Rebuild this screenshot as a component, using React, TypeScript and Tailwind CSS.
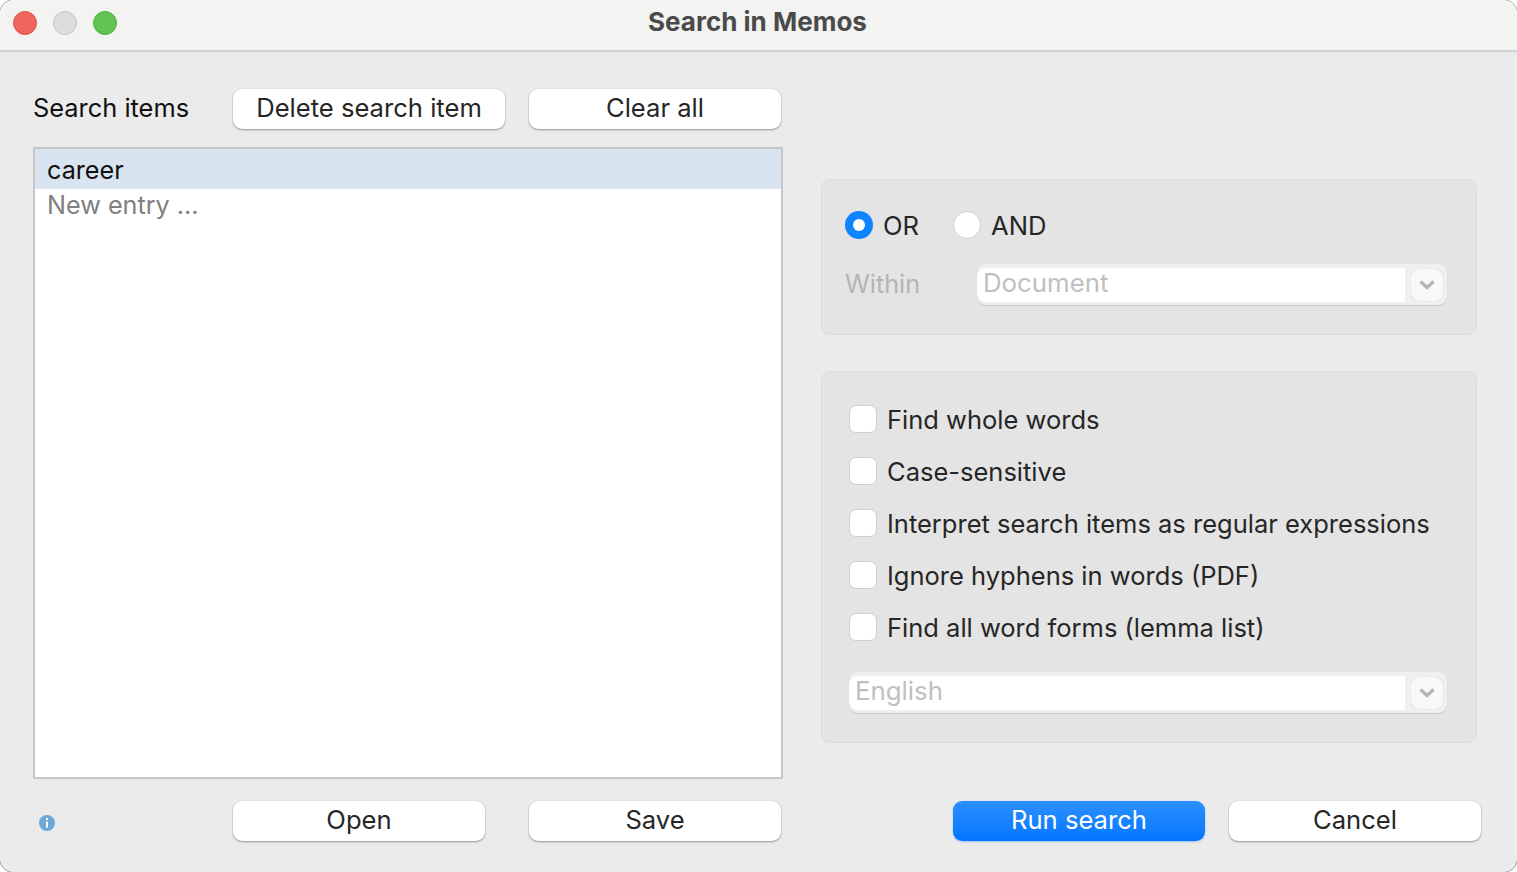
import React from 'react';

const font = { fontFamily: 'Inter, "Liberation Sans", sans-serif' };

const Button = ({ label, width }: { label: string; width: string }) => (
  <button
    className={`${width} h-10 rounded-[9px] bg-white pb-[2px] text-[25.6px] leading-[38px] text-[#262626] shadow-[0_1px_2px_rgba(0,0,0,0.35),0_0_1px_rgba(0,0,0,0.2)]`}
  >
    {label}
  </button>
);

const Check = ({ label }: { label: string }) => (
  <div className="flex h-[52px] items-center gap-[10px]">
    <div className="h-7 w-7 rounded-[7px] border border-[#cfcfcf] bg-white" />
    <span className="pt-[2px] text-[25.5px] leading-8 text-[#262626]">{label}</span>
  </div>
);

const Combo = ({ label, width }: { label: string; width: string }) => (
  <div className={`${width} flex h-[41px] items-center rounded-[9px] bg-[#f0f0f0] shadow-[0_1px_1px_rgba(0,0,0,0.12)]`}>
    <div className="flex h-[34px] flex-1 items-center rounded-l-[9px] bg-white pb-[2px] pl-[6px] text-[25.8px] text-[#c0c0c0]">
      {label}
    </div>
    <div className="ml-[6px] mr-[4px] flex h-8 w-8 items-center justify-center rounded-[8px] bg-[#f8f8f8] shadow-[0_0_1px_rgba(0,0,0,0.25)]">
      <svg width="16" height="10" viewBox="0 0 16 10" fill="none">
        <path d="M1.5 1.5L8 7.5l6.5-6" stroke="#b4b4b4" strokeWidth="3.2" />
      </svg>
    </div>
  </div>
);

export default function App() {
  return (
    <div className="h-[872px] w-[1517px] overflow-hidden bg-white" style={font}>
      <div className="flex h-full flex-col overflow-hidden rounded-[14px] bg-[#ebebeb] shadow-[0_0_0_1px_#a8a8a8]">
        <div className="relative flex h-[52px] shrink-0 items-center justify-center border-b-2 border-[#d2d2d2] bg-[#f3f3f1]">
          <div className="absolute left-[13px] top-[11px] flex gap-[16px]">
            <div className="h-6 w-6 rounded-full border border-[#d9534a] bg-[#f0665c]" />
            <div className="h-6 w-6 rounded-full border border-[#c4c4c4] bg-[#dcdcda]" />
            <div className="h-6 w-6 rounded-full border border-[#4fae45] bg-[#61c554]" />
          </div>
          <span className="pb-[8px] pr-[2px] text-[26px] font-bold text-[#4a4a4a]">Search in Memos</span>
        </div>

        <div className="flex flex-1 pl-[33px]">
          <div className="flex w-[750px] flex-col pt-[37px]">
            <div className="flex h-10 items-center">
              <span className="w-[200px] pb-[1px] text-[25.4px] text-[#111]">Search items</span>
              <Button label="Delete search item" width="w-[272px]" />
              <div className="w-[24px]" />
              <Button label="Clear all" width="w-[252px]" />
            </div>
            <div className="mt-[18px] h-[632px] border-2 border-[#c6c6c6] bg-white">
              <div className="flex h-[40px] items-center bg-[#d8e4ef] pl-3 pt-[4px] text-[25.2px] text-[#111]">career</div>
              <div className="pl-3 text-[25.2px] leading-8 text-[#808080]">New entry ...</div>
            </div>
            <div className="mt-[22px] flex h-10 items-center">
              <div className="w-[200px] pl-[6px] pt-[4px]">
                <svg width="16" height="16" viewBox="0 0 16 16">
                  <circle cx="8" cy="8" r="8" fill="#6ea8d8" />
                  <rect x="7" y="3" width="2" height="2" fill="#fff" />
                  <rect x="7" y="6.5" width="2" height="6" fill="#fff" />
                </svg>
              </div>
              <Button label="Open" width="w-[252px]" />
              <div className="w-[44px]" />
              <Button label="Save" width="w-[252px]" />
            </div>
          </div>

          <div className="ml-[38px] flex w-[660px] flex-col pt-[127px]">
            <div className="h-[156px] w-[656px] rounded-[9px] border border-[#dcdcdc] bg-[#e4e4e4] pl-[23px] pt-[27px]">
              <div className="flex h-9 items-center">
                <div className="flex h-7 w-7 items-center justify-center rounded-full bg-[#0f84ff]">
                  <div className="h-3 w-3 rounded-full bg-white" />
                </div>
                <span className="ml-[10px] w-[70px] pt-[2px] text-[25.6px] text-[#262626]">OR</span>
                <div className="h-7 w-7 rounded-full border border-[#cfcfcf] bg-white" />
                <span className="ml-[10px] pt-[2px] text-[25.6px] text-[#262626]">AND</span>
              </div>
              <div className="mt-[21px] flex items-center">
                <span className="w-[132px] text-[25.2px] text-[#b4b4b4]">Within</span>
                <Combo label="Document" width="w-[470px]" />
              </div>
            </div>

            <div className="mt-[36px] h-[372px] w-[656px] rounded-[9px] border border-[#dcdcdc] bg-[#e4e4e4] pl-[27px] pt-[21px]">
              <Check label="Find whole words" />
              <Check label="Case-sensitive" />
              <Check label="Interpret search items as regular expressions" />
              <Check label="Ignore hyphens in words (PDF)" />
              <Check label="Find all word forms (lemma list)" />
              <div className="mt-[19px]">
                <Combo label="English" width="w-[598px]" />
              </div>
            </div>

            <div className="mt-[58px] flex h-10 items-center justify-end gap-6">
              <button className="h-10 w-[252px] rounded-[9px] bg-gradient-to-b from-[#2a90ff] to-[#0076ff] pb-[2px] text-[25.6px] leading-[38px] text-white shadow-[0_1px_2px_rgba(0,100,255,0.3)]">
                Run search
              </button>
              <Button label="Cancel" width="w-[252px]" />
            </div>
          </div>
        </div>
      </div>
    </div>
  );
}
